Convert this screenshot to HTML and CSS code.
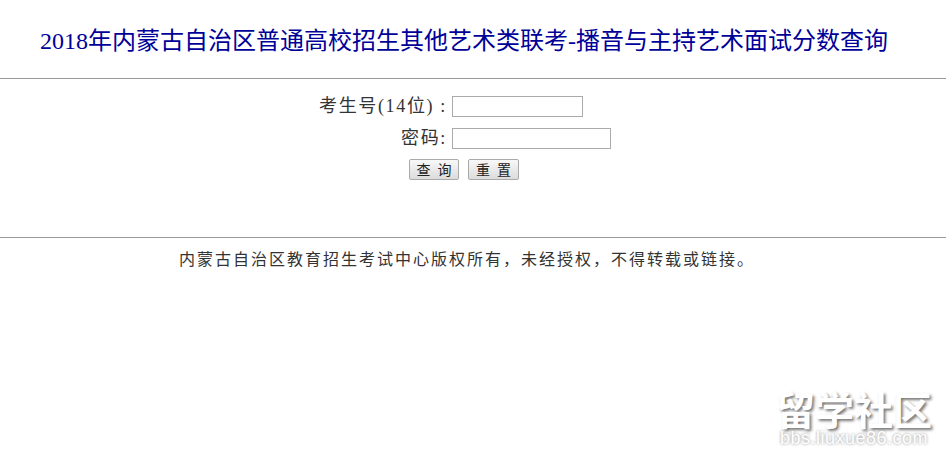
FILE: index.html
```html
<!DOCTYPE html>
<html lang="zh-CN">
<head>
    <meta charset="UTF-8">
    <title>2018年内蒙古自治区普通高校招生其他艺术类联考-播音与主持艺术面试分数查询</title>
    <link rel="stylesheet" href="styles.css">
</head>
<body>
    <h1 class="title">2018年内蒙古自治区普通高校招生其他艺术类联考-播音与主持艺术面试分数查询</h1>
    <hr class="rule">
    <form class="query">
        <div class="row">
            <label class="label" for="ksh">考生号(14位) :</label>
            <input class="field field-short" type="text" id="ksh">
        </div>
        <div class="row">
            <label class="label" for="pwd">密码:</label>
            <input class="field field-long" type="password" id="pwd">
        </div>
        <div class="buttons">
            <button class="btn" type="button">查 询</button>
            <button class="btn btn-reset" type="reset">重 置</button>
        </div>
    </form>
    <hr class="rule">
    <p class="copyright">内蒙古自治区教育招生考试中心版权所有&#xFF0C;未经授权&#xFF0C;不得转载或链接。</p>
    <div class="watermark">
        <div class="mark-name">留学社区</div>
        <div class="mark-url">bbs.liuxue86.com</div>
    </div>
</body>
</html>
```
FILE: styles.css
```css
html, body {
    height: 100%;
}
body {
    margin: 0;
    background-color: #fff;
    color: #333;
    font-family: "Liberation Serif", "Noto Sans CJK SC", serif;
    overflow: hidden;
    position: relative;
}
.title {
    margin: 0;
    padding: 27px 18px 23px 0;
    height: 28px;
    line-height: 28px;
    font-size: 24px;
    font-weight: normal;
    text-align: center;
    color: #000099;
}
.rule {
    margin: 0;
    border: none;
    border-top: 1px solid #999;
}
.query {
    height: 158px;
    padding-top: 16px;
    box-sizing: border-box;
}
.row {
    display: grid;
    grid-template-columns: 447px auto;
    column-gap: 5px;
    justify-content: start;
    align-items: center;
    height: 22px;
    margin-bottom: 10px;
}
.label {
    text-align: right;
    font-size: 18px;
    line-height: 22px;
    letter-spacing: 1.65px;
}
.field {
    box-sizing: border-box;
    height: 21px;
    padding: 1px 2px;
    border: 1px solid #aaa;
    background-color: #fff;
}
.field-short {
    width: 131px;
}
.field-long {
    width: 159px;
}
.buttons {
    display: flex;
    justify-content: center;
    gap: 9px;
    padding-right: 18px;
}
.btn {
    box-sizing: border-box;
    width: 50px;
    height: 21px;
    padding: 0;
    border: 1px solid #aaa;
    border-radius: 2px;
    background: linear-gradient(#f8f8f8, #dcdcdc);
    color: #222;
    font-family: "Noto Sans CJK SC", sans-serif;
    font-size: 14px;
    line-height: 19px;
    word-spacing: 4px;
}
.btn-reset {
    width: 51px;
}
.copyright {
    margin: 12px 0 0;
    padding-right: 12px;
    font-size: 16px;
    letter-spacing: 2px;
    line-height: 20px;
    text-align: center;
}
.watermark {
    position: absolute;
    left: 776px;
    top: 388px;
    width: 156px;
    text-align: center;
    color: #fff;
}
.mark-name {
    font-family: "Noto Sans CJK SC", sans-serif;
    font-size: 39px;
    font-weight: bold;
    line-height: 41px;
    text-shadow: 2px 2px 3px #777;
}
.mark-url {
    font-family: "Liberation Sans", sans-serif;
    font-size: 18px;
    letter-spacing: .5px;
    line-height: 18px;
    text-shadow: 0 0 3px #888;
}
```
